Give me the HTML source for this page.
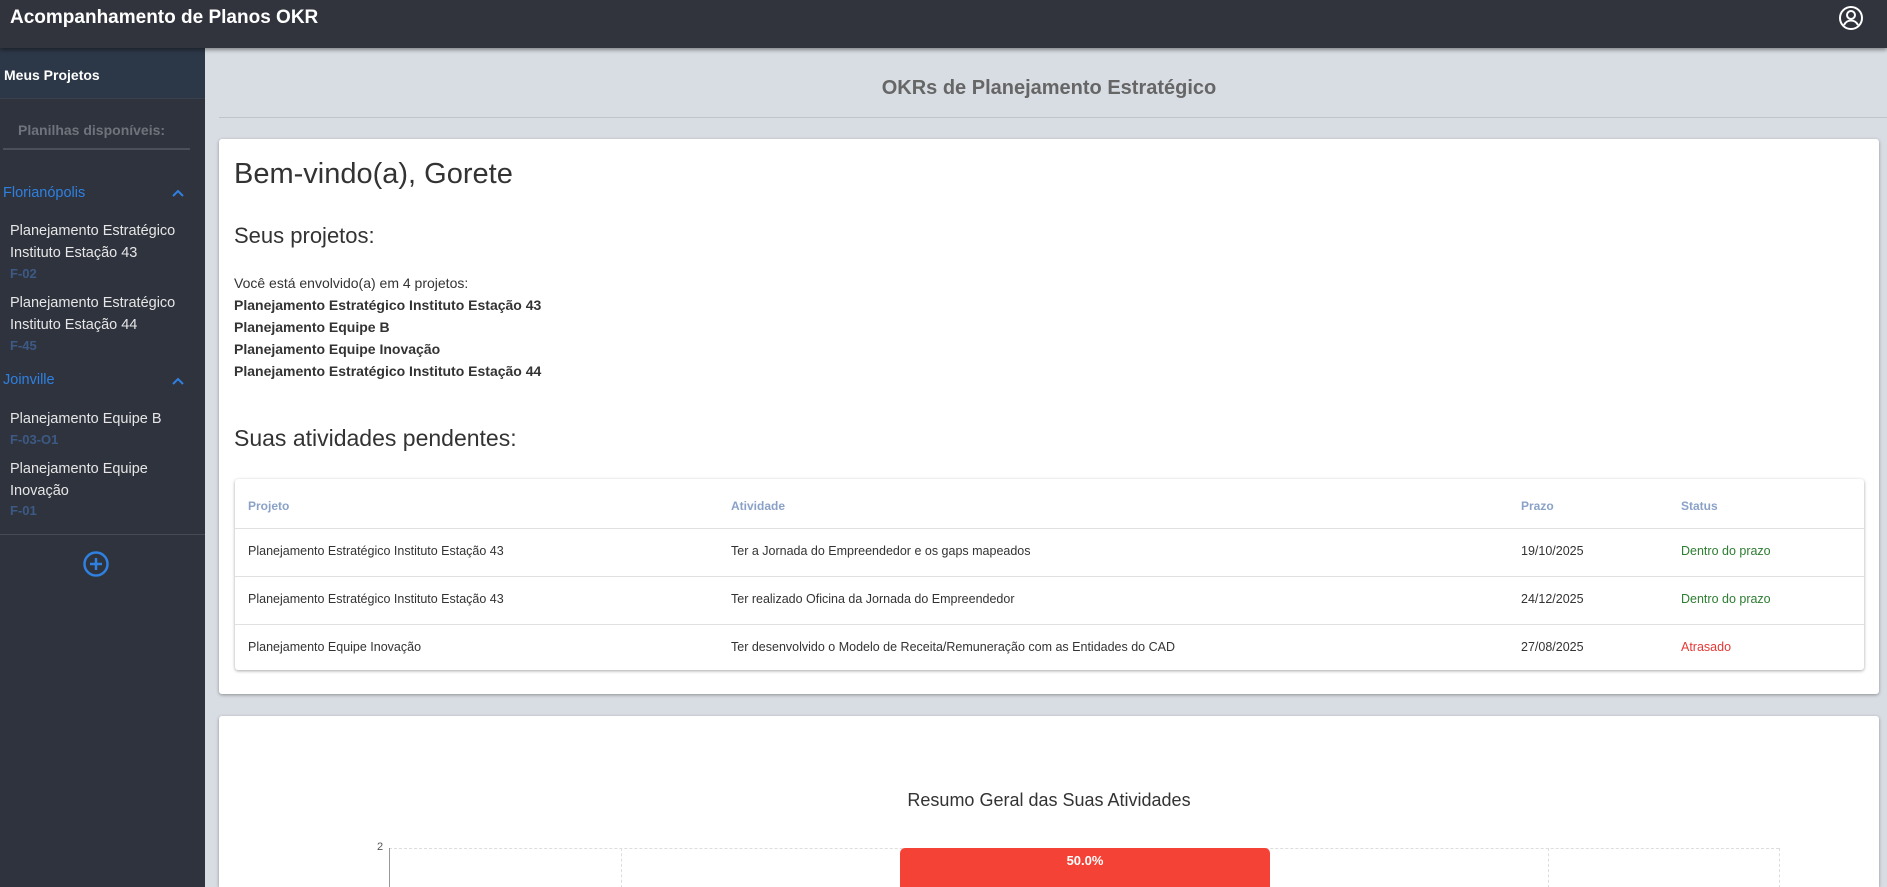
<!DOCTYPE html>
<html><head><meta charset="utf-8"><style>
*{margin:0;padding:0;box-sizing:border-box}
html,body{width:1887px;height:887px;overflow:hidden}
body{background:#d8dde3;font-family:"Liberation Sans",Roboto,sans-serif;position:relative}
.hdr{position:absolute;left:0;top:0;width:1887px;height:48px;background:#31343d;box-shadow:0 2px 4px rgba(0,0,0,.4);z-index:2}
.hdr h1{position:absolute;left:10px;top:7px;color:#fff;font-size:19px;font-weight:bold}
.side{position:absolute;left:0;top:48px;width:205px;height:839px;background:#2f333d}
.abs{position:absolute;white-space:nowrap}
.it{color:#e6e6e6;font-size:14.5px}
.code{color:#3c5a85;font-size:13px;font-weight:bold}
.grp{color:#2f80e0;font-size:14.5px}
.card{position:absolute;background:#fff;border-radius:3px;box-shadow:0 1px 3px rgba(0,0,0,.35)}
.t{color:#333;}
.th{color:#8aa2c8;font-size:12px;font-weight:bold}
.td{color:#333;font-size:12.5px}
</style></head><body>
<div class="hdr"><h1>Acompanhamento de Planos OKR</h1>
<svg style="position:absolute;left:1838px;top:5px" width="26" height="26" viewBox="0 0 26 26" fill="none" stroke="#fff" stroke-width="2"><circle cx="13" cy="13" r="11"/><circle cx="13" cy="10" r="4"/><path d="M6 20c2-3.5 4-4.5 7-4.5s5 1 7 4.5"/></svg>
</div>
<div class="side">
<div style="position:absolute;left:0;top:0;width:205px;height:51px;background:#2c3747;border-bottom:1px solid #3a404b"></div>
<div class="abs" style="left:4px;top:19px;color:#fff;font-weight:bold;font-size:14px">Meus Projetos</div>
<div class="abs" style="left:18px;top:74px;color:#6f747c;font-weight:bold;font-size:14px">Planilhas disponíveis:</div>
<div style="position:absolute;left:3px;top:100px;width:187px;height:2px;background:#4a4f58"></div>
<div class="abs grp" style="left:3px;top:137px">Florianópolis</div>
<svg style="position:absolute;left:172px;top:140px" width="12" height="10" viewBox="0 0 12 10" fill="none" stroke="#2f80e0" stroke-width="2"><path d="M1 8l5-5 5 5"/></svg>
<div class="abs it" style="left:10px;top:175px">Planejamento Estratégico</div>
<div class="abs it" style="left:10px;top:197px">Instituto Estação 43</div>
<div class="abs code" style="left:10px;top:218px">F-02</div>
<div class="abs it" style="left:10px;top:247px">Planejamento Estratégico</div>
<div class="abs it" style="left:10px;top:269px">Instituto Estação 44</div>
<div class="abs code" style="left:10px;top:290px">F-45</div>
<div class="abs grp" style="left:3px;top:324px">Joinville</div>
<svg style="position:absolute;left:172px;top:328px" width="12" height="10" viewBox="0 0 12 10" fill="none" stroke="#2f80e0" stroke-width="2"><path d="M1 8l5-5 5 5"/></svg>
<div class="abs it" style="left:10px;top:363px">Planejamento Equipe B</div>
<div class="abs code" style="left:10px;top:384px">F-03-O1</div>
<div class="abs it" style="left:10px;top:413px">Planejamento Equipe</div>
<div class="abs it" style="left:10px;top:435px">Inovação</div>
<div class="abs code" style="left:10px;top:455px">F-01</div>
<div style="position:absolute;left:0;top:486px;width:205px;height:1px;background:#454a53"></div>
<svg style="position:absolute;left:82px;top:502px" width="28" height="28" viewBox="0 0 28 28" fill="none" stroke="#2f80e0" stroke-width="2.5"><circle cx="14" cy="14" r="11.5"/><path d="M14 8v12M8 14h12"/></svg>
</div>
<div class="abs" style="left:219px;width:1660px;top:77px;text-align:center;color:#666;font-size:20px;font-weight:bold">OKRs de Planejamento Estratégico</div>
<div style="position:absolute;left:219px;top:117px;width:1668px;height:1px;background:#bfc4cb"></div>
<div class="card" style="left:219px;top:139px;width:1660px;height:555px">
<div class="abs t" style="left:15px;top:19px;font-size:29px">Bem-vindo(a), Gorete</div>
<div class="abs t" style="left:15px;top:84px;font-size:22px">Seus projetos:</div>
<div class="abs t" style="left:15px;top:133px;font-size:14px;line-height:22px">Você está envolvido(a) em 4 projetos:<br><b>Planejamento Estratégico Instituto Estação 43<br>Planejamento Equipe B<br>Planejamento Equipe Inovação<br>Planejamento Estratégico Instituto Estação 44</b></div>
<div class="abs t" style="left:15px;top:286px;font-size:23px">Suas atividades pendentes:</div>
<div class="card" style="left:16px;top:340px;width:1629px;height:191px">
<div class="abs th" style="left:13px;top:20px">Projeto</div>
<div class="abs th" style="left:496px;top:20px">Atividade</div>
<div class="abs th" style="left:1286px;top:20px">Prazo</div>
<div class="abs th" style="left:1446px;top:20px">Status</div>
<div style="position:absolute;left:0;top:49px;width:100%;height:1px;background:#e0e0e0"></div>
<div class="abs td" style="left:13px;top:65px">Planejamento Estratégico Instituto Estação 43</div>
<div class="abs td" style="left:496px;top:65px">Ter a Jornada do Empreendedor e os gaps mapeados</div>
<div class="abs td" style="left:1286px;top:65px">19/10/2025</div>
<div class="abs td" style="left:1446px;top:65px;color:#2e7d32">Dentro do prazo</div>
<div style="position:absolute;left:0;top:97px;width:100%;height:1px;background:#e0e0e0"></div>
<div class="abs td" style="left:13px;top:113px">Planejamento Estratégico Instituto Estação 43</div>
<div class="abs td" style="left:496px;top:113px">Ter realizado Oficina da Jornada do Empreendedor</div>
<div class="abs td" style="left:1286px;top:113px">24/12/2025</div>
<div class="abs td" style="left:1446px;top:113px;color:#2e7d32">Dentro do prazo</div>
<div style="position:absolute;left:0;top:145px;width:100%;height:1px;background:#e0e0e0"></div>
<div class="abs td" style="left:13px;top:161px">Planejamento Equipe Inovação</div>
<div class="abs td" style="left:496px;top:161px">Ter desenvolvido o Modelo de Receita/Remuneração com as Entidades do CAD</div>
<div class="abs td" style="left:1286px;top:161px">27/08/2025</div>
<div class="abs td" style="left:1446px;top:161px;color:#e53935">Atrasado</div>
</div>
</div>
<div class="card" style="left:219px;top:716px;width:1660px;height:171px;border-radius:3px 3px 0 0">
<div class="abs" style="left:0;width:1660px;top:74px;text-align:center;color:#333;font-size:18px">Resumo Geral das Suas Atividades</div>
<div style="position:absolute;left:170px;top:132px;width:1390px;border-top:1px dashed #ddd"></div>
<div style="position:absolute;left:402px;top:132px;height:40px;border-left:1px dashed #ddd"></div>
<div style="position:absolute;left:1329px;top:132px;height:40px;border-left:1px dashed #ddd"></div>
<div style="position:absolute;left:1560px;top:132px;height:40px;border-left:1px dashed #ddd"></div>
<div style="position:absolute;left:170px;top:132px;height:40px;border-left:1px solid #999"></div>
<div class="abs" style="left:158px;top:125px;font-size:11px;color:#555">2</div>
<div style="position:absolute;left:681px;top:132px;width:370px;height:40px;background:#f44336;border-radius:5px 5px 0 0"></div>
<div class="abs" style="left:681px;width:370px;top:137px;text-align:center;color:#fff;font-weight:bold;font-size:13px">50.0%</div>
</div>
</body></html>
